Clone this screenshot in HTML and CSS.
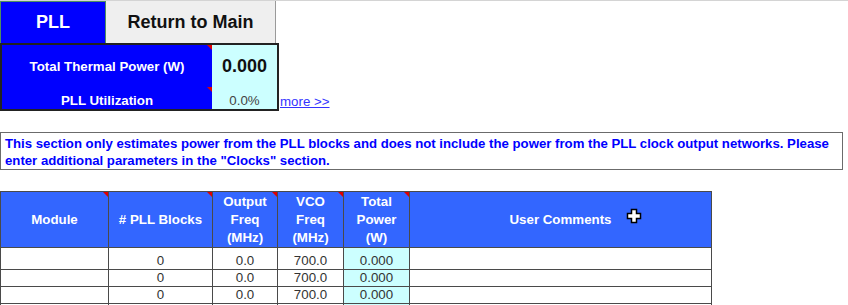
FILE: index.html
```html
<!DOCTYPE html>
<html lang="en">
<head>
    <meta charset="UTF-8">
    <title>PLL</title>
    <link rel="stylesheet" href="styles.css">
</head>
<body>
    <div class="sheet">
        <div class="head-row">
            <div class="tab-pll">PLL</div>
            <div class="btn-main">Return to Main</div>
        </div>

        <div class="summary-row">
            <table class="summary">
                <colgroup><col class="c-label"><col class="c-value"></colgroup>
                <tr class="r-total">
                    <td class="label flag">Total Thermal Power (W)</td>
                    <td class="value big">0.000</td>
                </tr>
                <tr class="r-util">
                    <td class="label flag">PLL Utilization</td>
                    <td class="value">0.0%</td>
                </tr>
            </table>
            <a class="more" href="#">more &gt;&gt;</a>
        </div>

        <div class="note">
            This section only estimates power from the PLL blocks and does not include the power from the PLL clock output networks. Please
            enter additional parameters in the "Clocks" section.
        </div>

        <table class="grid">
            <colgroup>
                <col style="width:108px">
                <col style="width:104px">
                <col style="width:65px">
                <col style="width:66px">
                <col style="width:66px">
                <col style="width:302px">
            </colgroup>
            <tr class="hdr">
                <th class="flag">Module</th>
                <th class="flag"># PLL Blocks</th>
                <th class="flag">Output<br>Freq<br>(MHz)</th>
                <th class="flag">VCO<br>Freq<br>(MHz)</th>
                <th class="flag">Total<br>Power<br>(W)</th>
                <th>User Comments</th>
            </tr>
            <tr class="first">
                <td></td><td>0</td><td>0.0</td><td>700.0</td><td class="calc">0.000</td><td></td>
            </tr>
            <tr>
                <td></td><td>0</td><td>0.0</td><td>700.0</td><td class="calc">0.000</td><td></td>
            </tr>
            <tr>
                <td></td><td>0</td><td>0.0</td><td>700.0</td><td class="calc">0.000</td><td></td>
            </tr>
            <tr>
                <td></td><td></td><td></td><td></td><td class="calc"></td><td></td>
            </tr>
        </table>

        <svg class="cursor" width="16" height="16" viewBox="0 0 16 16">
            <path d="M5.5 1.5h5v4h4v5h-4v4h-5v-4h-4v-5h4z" fill="#fff" stroke="#000" stroke-width="1.5"/>
        </svg>
    </div>
</body>
</html>
```

FILE: styles.css
```css
body {
    margin: 0;
    background: #fff;
    font-family: "Liberation Sans", Arial, sans-serif;
    font-size: 13.3px;
}
.sheet {
    position: relative;
    width: 848px;
    height: 305px;
    overflow: hidden;
}
.head-row {
    display: flex;
    height: 44px;
    border-top: 1px solid #d4d4d4;
    box-sizing: border-box;
}
.tab-pll {
    width: 106px;
    background: #0000ff;
    color: #fff;
    font-weight: bold;
    font-size: 18px;
    display: flex;
    align-items: center;
    justify-content: center;
    border: 1px solid #4f8f5f;
    box-sizing: border-box;
}
.btn-main {
    width: 169px;
    background: #efefef;
    border-right: 1px solid #9a9a9a;
    border-bottom: 1px solid #c8c8c8;
    font-weight: bold;
    font-size: 18px;
    display: flex;
    align-items: center;
    justify-content: center;
    color: #111;
}
.summary-row {
    display: flex;
    align-items: flex-end;
    height: 67px;
}
.summary {
    border-collapse: collapse;
    table-layout: fixed;
    width: 277px;
    border: 2px solid #222;
}
.c-label { width: 211px; }
.c-value { width: 66px; }
.summary td {
    padding: 0;
    text-align: center;
}
.summary .label {
    background: #0000ff;
    color: #fff;
    font-weight: bold;
}
.summary .value {
    background: #ccffff;
    color: #444;
}
.summary .big {
    font-size: 18px;
    font-weight: bold;
    color: #111;
}
.r-total td { height: 42px; vertical-align: middle; }
.r-util td { height: 22px; line-height: 16px; vertical-align: bottom; }
.more {
    margin-left: 1px;
    margin-bottom: 2px;
    color: #3333ff;
    font-size: 13.3px;
}
.note {
    margin-top: 21px;
    width: 843px;
    height: 38px;
    box-sizing: border-box;
    border: 1px solid #6b6b6b;
    padding: 2px 4px 0;
    color: #0000ff;
    font-weight: bold;
    font-size: 13.2px;
    line-height: 17px;
}
.grid {
    margin-top: 21px;
    border-collapse: collapse;
    table-layout: fixed;
    width: 711px;
}
.grid th, .grid td {
    border: 1px solid #4a4a4a;
    padding: 0;
    text-align: center;
}
.grid th {
    height: 55px;
    background: #3366ff;
    color: #fff;
    font-weight: bold;
    line-height: 18px;
}
.grid td {
    height: 16px;
    line-height: 16px;
    color: #333;
    vertical-align: bottom;
    border-top-color: #666;
}
.grid tr.first td { height: 20px; padding-top: 1px; }
.grid td.calc { background: #ccffff; }
.flag { position: relative; }
.flag::after {
    content: "";
    position: absolute;
    top: 0;
    right: 0;
    border-top: 5px solid #e00000;
    border-left: 5px solid transparent;
}
.cursor {
    position: absolute;
    left: 626px;
    top: 208px;
}
```
